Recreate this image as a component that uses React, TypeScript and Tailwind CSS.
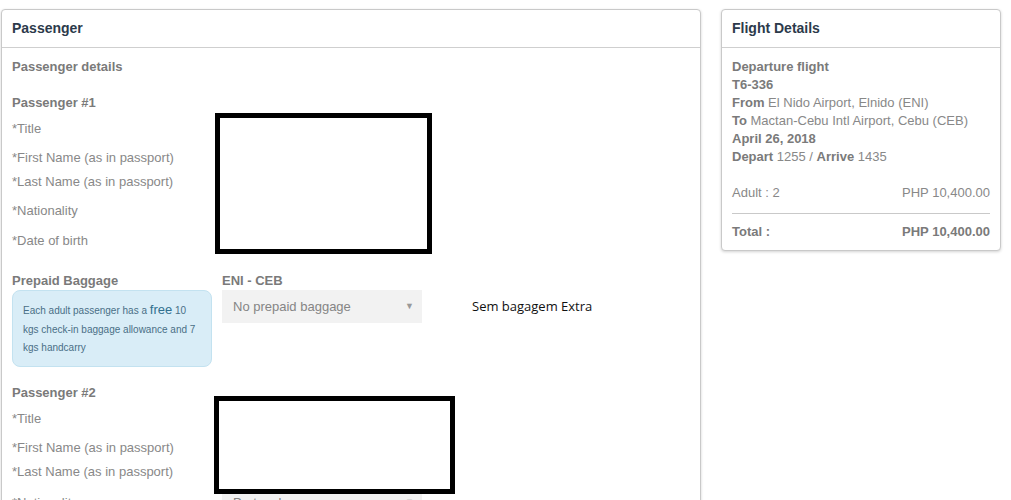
import React from 'react';

const Label: React.FC<{ text: string; mt: string }> = ({ text, mt }) => (
  <div className={`${mt} leading-[18px] text-[#888]`}>{text}</div>
);

const PanelHeader: React.FC<{ title: string }> = ({ title }) => (
  <div className="h-[38px] flex items-center px-[10px] border-b border-[#cfcfcf]">
    <h2 className="font-bold text-[14px] text-[#2c3a4b]">{title}</h2>
  </div>
);

export default function App() {
  return (
    <div
      className="w-[1011px] h-[500px] overflow-hidden bg-white flex items-start gap-[20px] pt-[9px] pl-[1px] text-[13px]"
      style={{ fontFamily: '"Liberation Sans", Arial, sans-serif' }}
    >
      {/* Passenger panel */}
      <section className="relative w-[700px] h-[520px] shrink-0 border border-[#c9c9c9] rounded-[4px] shadow-[0_1px_3px_rgba(0,0,0,0.18)] bg-white">
        <PanelHeader title="Passenger" />
        <div className="px-[10px]">
          <div className="mt-[10px] leading-[18px] font-bold text-[#7a7a7a]">Passenger details</div>
          <div className="mt-[18px] leading-[18px] font-bold text-[#7a7a7a]">Passenger #1</div>
          <Label mt="mt-[8px]" text="*Title" />
          <Label mt="mt-[11px]" text="*First Name (as in passport)" />
          <Label mt="mt-[6px]" text="*Last Name (as in passport)" />
          <Label mt="mt-[11px]" text="*Nationality" />
          <Label mt="mt-[12px]" text="*Date of birth" />

          {/* Prepaid baggage */}
          <div className="mt-[22px] flex leading-[18px] font-bold text-[#7a7a7a]">
            <div className="w-[210px]">Prepaid Baggage</div>
            <div>ENI - CEB</div>
          </div>
          <div className="flex items-start">
            <div className="w-[200px] h-[77px] mr-[10px] rounded-[8px] bg-[#d9edf7] border border-[#c3e2f0] px-[10px] pt-[10px] text-[10px] leading-[18.5px] text-[#4a6f86]">
              Each adult passenger has a <span className="text-[13px] text-[#31708f]">free</span> 10
              <br />
              kgs check-in baggage allowance and 7
              <br />
              kgs handcarry
            </div>
            <div className="w-[200px] h-[33px] bg-[#f2f2f2] flex items-center justify-between pl-[11px] pr-[8px] text-[#858585]">
              <span>No prepaid baggage</span>
              <span className="text-[9px] text-[#999]">▼</span>
            </div>
            <div
              className="ml-[50px] h-[33px] flex items-center text-[13px] text-[#111]"
              style={{ fontFamily: '"Open Sans", sans-serif' }}
            >
              Sem bagagem Extra
            </div>
          </div>

          <div className="mt-[17px] leading-[18px] font-bold text-[#7a7a7a]">Passenger #2</div>
          <Label mt="mt-[8px]" text="*Title" />
          <Label mt="mt-[11px]" text="*First Name (as in passport)" />
          <Label mt="mt-[6px]" text="*Last Name (as in passport)" />
          <div className="mt-[5px] flex items-center">
            <div className="w-[210px] text-[#888]">*Nationality</div>
            <div className="w-[200px] h-[33px] bg-[#f2f2f2] flex items-center justify-between pl-[11px] pr-[8px] text-[#858585]">
              <span>Portugal</span>
              <span className="text-[9px] text-[#999]">▼</span>
            </div>
          </div>
        </div>

        {/* redaction boxes drawn over the inputs */}
        <div className="absolute left-[213px] top-[103px] w-[217px] h-[141px] border-[5px] border-black bg-white" />
        <div className="absolute left-[212px] top-[386px] w-[241px] h-[98px] border-[5px] border-black bg-white" />
      </section>

      {/* Flight details panel */}
      <aside className="w-[280px] shrink-0 border border-[#c9c9c9] rounded-[4px] shadow-[0_1px_3px_rgba(0,0,0,0.18)] bg-white">
        <PanelHeader title="Flight Details" />
        <div className="px-[10px] pt-[10px] pb-[9px] leading-[18px] text-[#888]">
          <div className="font-bold text-[#7a7a7a]">Departure flight</div>
          <div className="font-bold text-[#7a7a7a]">T6-336</div>
          <div>
            <span className="font-bold text-[#7a7a7a]">From</span> El Nido Airport, Elnido (ENI)
          </div>
          <div>
            <span className="font-bold text-[#7a7a7a]">To</span> Mactan-Cebu Intl Airport, Cebu (CEB)
          </div>
          <div className="font-bold text-[#7a7a7a]">April 26, 2018</div>
          <div>
            <span className="font-bold text-[#7a7a7a]">Depart</span> 1255 /{' '}
            <span className="font-bold text-[#7a7a7a]">Arrive</span> 1435
          </div>

          <div className="mt-[18px] flex justify-between">
            <span>Adult : 2</span>
            <span>PHP 10,400.00</span>
          </div>
          <div className="mt-[11px] border-t border-[#c9c9c9]" />
          <div className="mt-[9px] flex justify-between font-bold text-[#7a7a7a]">
            <span>Total :</span>
            <span>PHP 10,400.00</span>
          </div>
        </div>
      </aside>
    </div>
  );
}
